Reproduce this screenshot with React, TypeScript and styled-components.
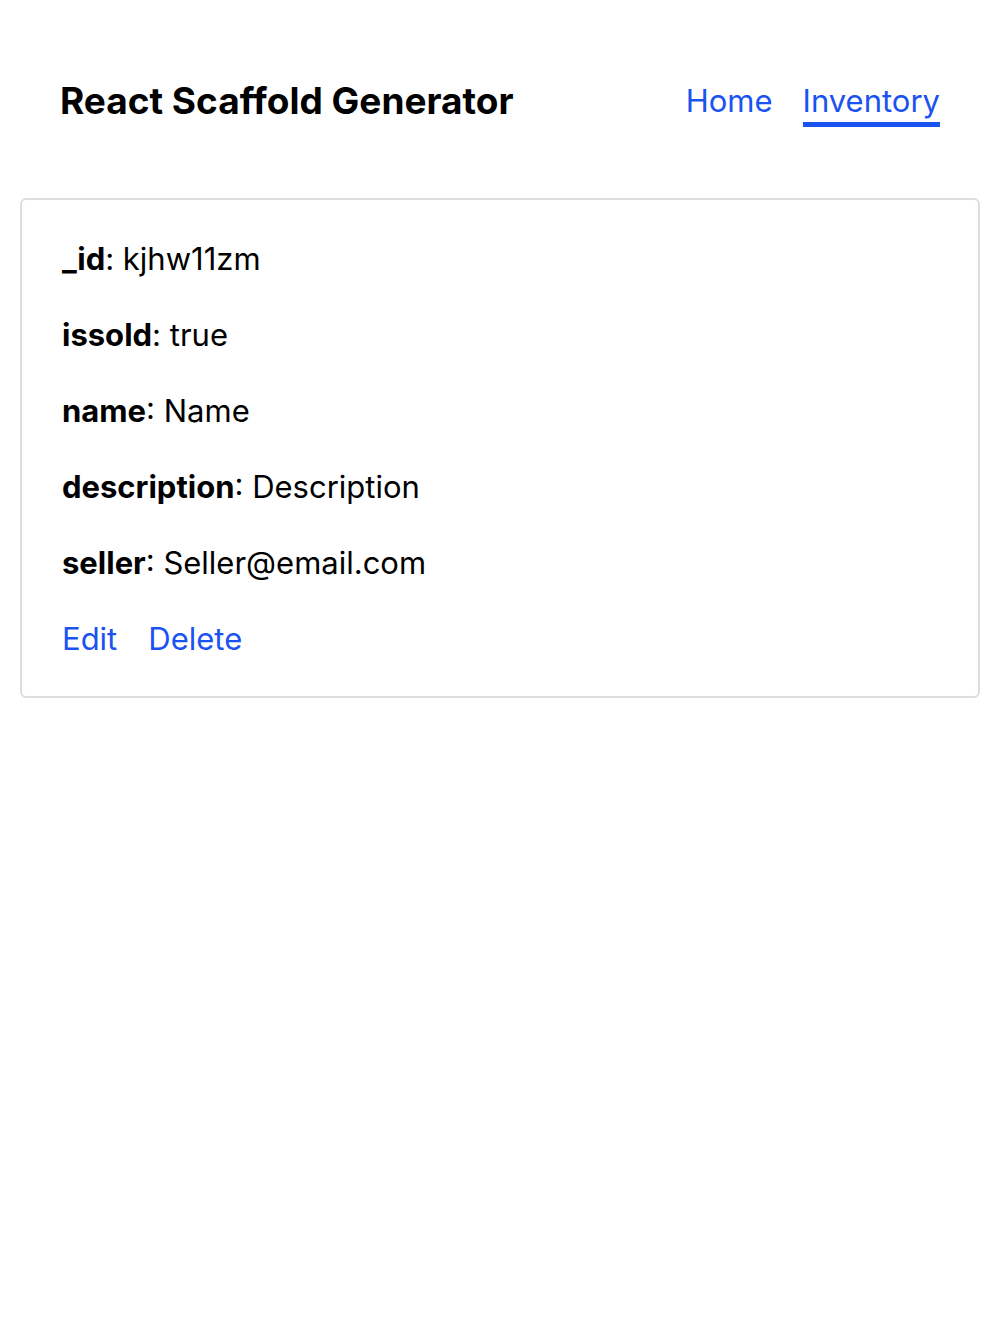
import React from "react";
import styled, { createGlobalStyle } from "styled-components";

const GlobalStyle = createGlobalStyle`
  html, body {
    margin: 0;
    padding: 0;
    background: #ffffff;
  }
  body {
    font-family: Inter, "Noto Sans", "Liberation Sans", sans-serif;
    color: #000000;
  }
`;

const LINK_COLOR = "#1a53f0";

const item = {
  _id: "kjhw11zm",
  issold: "true",
  name: "Name",
  description: "Description",
  seller: "Seller@email.com",
};

const App = () => {
  return (
    <>
      <GlobalStyle />
      <Header>
        <Title>React Scaffold Generator</Title>
        <Nav>
          <NavLink href="#">Home</NavLink>
          <NavLink href="#" $active>
            Inventory
          </NavLink>
        </Nav>
      </Header>
      <Card>
        {Object.entries(item).map(([key, value]) => (
          <Field key={key}>
            <FieldName>{key}</FieldName>: {value}
          </Field>
        ))}
        <Actions>
          <ActionLink href="#">Edit</ActionLink>
          <ActionLink href="#">Delete</ActionLink>
        </Actions>
      </Card>
    </>
  );
};

const Header = styled.header`
  display: flex;
  align-items: center;
  justify-content: space-between;
  padding: 78px 60px 0 60px;
  height: 46px;
  margin-bottom: 74px;
`;

const Title = styled.h1`
  margin: 0;
  font-size: 37px;
  font-weight: 700;
  line-height: 46px;
`;

const Nav = styled.nav`
  display: flex;
  gap: 30px;
`;

const NavLink = styled.a<{ $active?: boolean }>`
  font-size: 31px;
  line-height: 42px;
  color: ${LINK_COLOR};
  text-decoration: none;
  border-bottom: 5px solid ${(p) => (p.$active ? LINK_COLOR : "transparent")};
  padding-top: 5px;
`;

const Card = styled.section`
  margin: 0 20px;
  padding: 41px 40px 39px 40px;
  border: 2px solid #dddddd;
  border-radius: 6px;
  display: flex;
  flex-direction: column;
  gap: 40px;
`;

const Field = styled.p`
  margin: 0;
  font-size: 31px;
  line-height: 36px;
`;

const FieldName = styled.strong`
  font-weight: 700;
`;

const Actions = styled.div`
  display: flex;
  gap: 31px;
  font-size: 31px;
  line-height: 36px;
`;

const ActionLink = styled.a`
  color: ${LINK_COLOR};
  text-decoration: none;
`;

export default App;
